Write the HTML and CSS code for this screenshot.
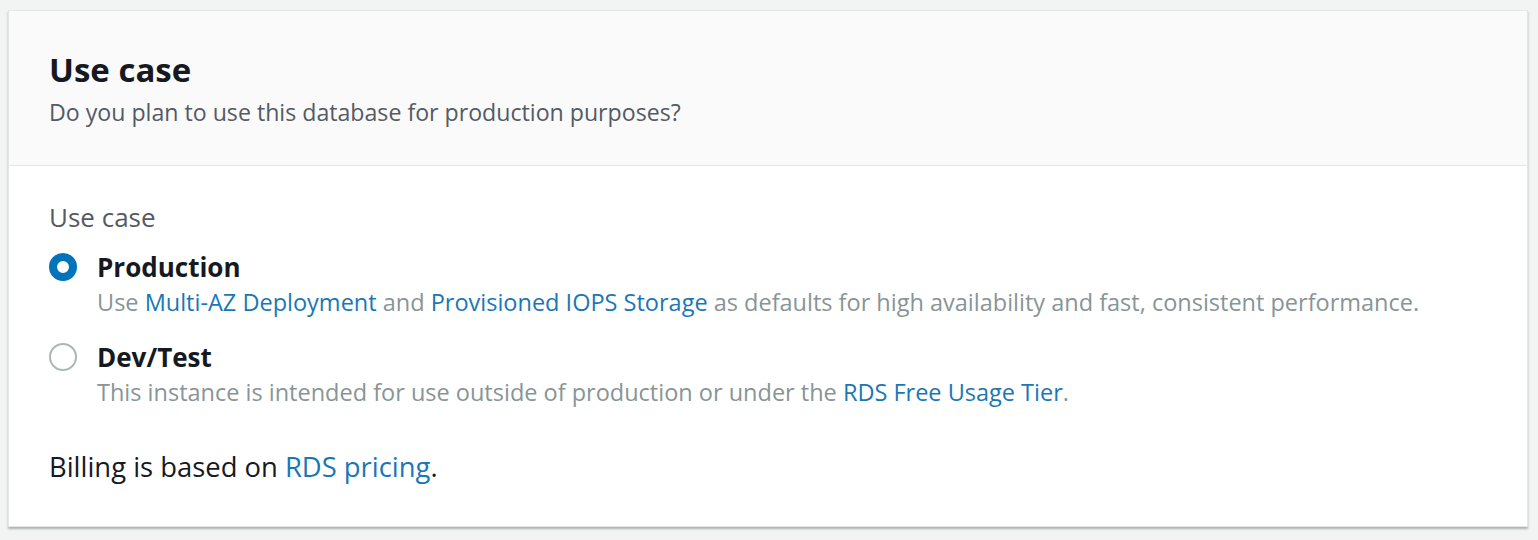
FILE: index.html
```html
<!DOCTYPE html>
<html>
<head>
<meta charset="utf-8">
<link rel="stylesheet" href="styles.css">
</head>
<body>
<section class="card">
  <header class="card-header">
    <h2 class="title">Use case</h2>
    <p class="subtitle">Do you plan to use this database for production purposes?</p>
  </header>
  <div class="card-body">
    <div class="label">Use case</div>
    <div class="option">
      <span class="radio checked"></span>
      <div class="option-text">
        <div class="option-name">Production</div>
        <div class="option-desc">Use <a href="#">Multi-AZ Deployment</a> and <a href="#">Provisioned IOPS Storage</a> as defaults for high availability and fast, consistent performance.</div>
      </div>
    </div>
    <div class="option">
      <span class="radio"></span>
      <div class="option-text">
        <div class="option-name">Dev/Test</div>
        <div class="option-desc">This instance is intended for use outside of production or under the <a href="#">RDS Free Usage Tier</a>.</div>
      </div>
    </div>
    <p class="billing">Billing is based on <a href="#">RDS pricing</a>.</p>
  </div>
</section>
</body>
</html>
```
FILE: styles.css
```css
html, body {
  margin: 0;
  padding: 0;
  background: #f2f3f3;
}
body {
  padding: 10px 10px 10px 8px;
  font-family: "Open Sans", "Noto Sans", sans-serif;
  color: #16191f;
}
.card {
  background: #ffffff;
  border: 1px solid #e4e6e6;
  box-shadow: 0 2px 2px rgba(0, 33, 43, 0.3);
}
.card-header {
  background: #fafafa;
  border-bottom: 1px solid #e4e6e6;
  padding: 35px 40px 35px;
}
.title {
  margin: 0;
  font-size: 33px;
  font-weight: 700;
  line-height: 48px;
  color: #16191f;
}
.subtitle {
  margin: 0;
  font-size: 23.15px;
  line-height: 36px;
  color: #545b64;
}
.card-body {
  padding: 34px 40px 41px;
}
.label {
  font-size: 26px;
  line-height: 34px;
  color: #545b64;
  margin-bottom: 16px;
}
.option {
  display: flex;
  align-items: flex-start;
  gap: 20px;
  margin-bottom: 20px;
}
.radio {
  flex: none;
  width: 28px;
  height: 28px;
  box-sizing: border-box;
  border-radius: 50%;
  border: 2px solid #aab7b8;
  margin-top: 3px;
  background: #fff;
}
.radio.checked {
  border: 8px solid #0073bb;
}
.option-name {
  font-size: 26px;
  font-weight: 700;
  line-height: 34px;
}
.option-desc {
  font-size: 23.5px;
  line-height: 36px;
  color: #879596;
}
a {
  color: #1a77b6;
  text-decoration: none;
}
.billing {
  margin: 39px 0 0;
  font-size: 27.4px;
  line-height: 36px;
}
```
